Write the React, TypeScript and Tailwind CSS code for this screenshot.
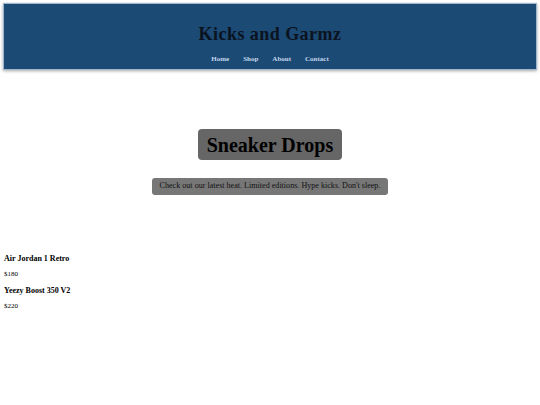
const products = [
  { name: 'Air Jordan 1 Retro', price: '$180' },
  { name: 'Yeezy Boost 350 V2', price: '$220' },
];

export default function App() {
  return (
    <div className="min-h-[405px] bg-white text-black" style={{ fontFamily: '"Liberation Serif", "Times New Roman", serif' }}>
      {/* Header */}
      <header className="mx-[3px] pt-[3px]">
        <div className="h-[67px] bg-[#1b4a74] border border-[#9fb6cf] shadow-[0_1px_3px_rgba(0,0,0,0.35)] flex flex-col items-center">
          <h1 className="mt-[20px] text-[18px] leading-[20px] font-bold tracking-[0.45px] text-[#0b1320]">Kicks and Garmz</h1>
          <nav className="mt-[11px] flex gap-[14px] text-[7px] leading-[8px] font-bold text-[#c3d6ec]">
            <a>Home</a>
            <a>Shop</a>
            <a>About</a>
            <a>Contact</a>
          </nav>
        </div>
      </header>

      {/* Hero */}
      <section className="flex flex-col items-center pt-[59px]">
        <h2 className="bg-[#666666] rounded-[4px] px-[9px] h-[31px] flex items-center text-[20px] font-bold leading-none">Sneaker Drops</h2>
        <p className="mt-[18px] bg-[#777777] rounded-[3px] px-[8px] h-[17px] flex items-center text-[8.1px] leading-none text-[#111]">
          Check out our latest heat. Limited editions. Hype kicks. Don&apos;t sleep.
        </p>
      </section>

      {/* Products */}
      <section className="mt-[59px] px-[4px]">
        {products.map((p) => (
          <div key={p.name}>
            <h3 className="text-[8px] leading-[10px] font-bold">{p.name}</h3>
            <p className="mt-[6px] mb-[7px] text-[7px] leading-[9px]">{p.price}</p>
          </div>
        ))}
      </section>
    </div>
  );
}
